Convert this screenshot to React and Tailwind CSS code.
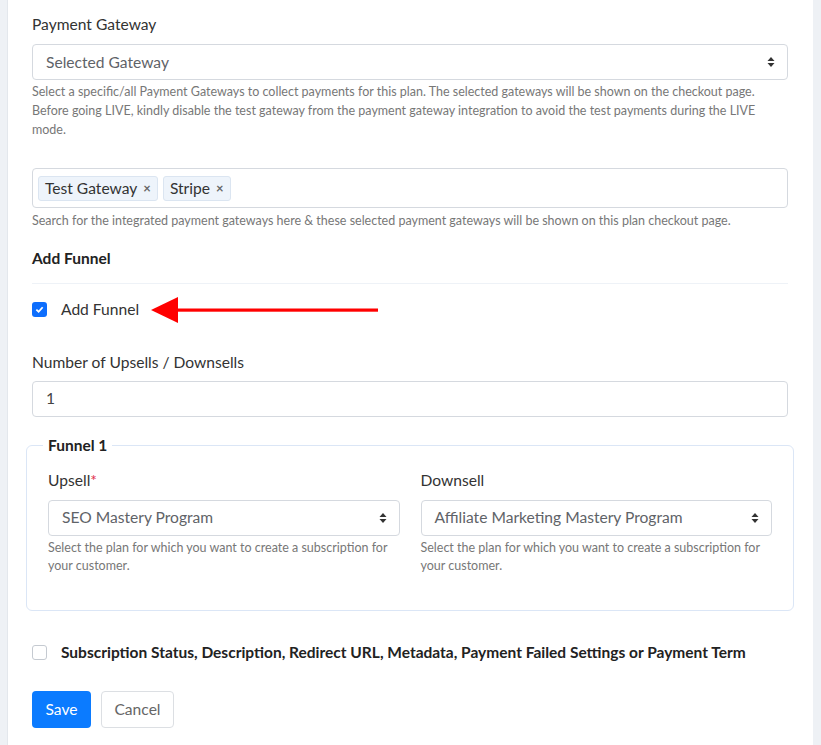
const font = { fontFamily: "Lato, 'Open Sans', sans-serif" };

function SelectBox({ value, className = "" }) {
  return (
    <div
      className={`flex h-[36px] items-center justify-between rounded-[4px] border border-[#d5d9df] bg-white pl-[13px] pr-[12px] text-[15.6px] text-[#5f6368] ${className}`}
    >
      <span>{value}</span>
      <svg width="8" height="12" viewBox="0 0 8 12" className="text-[#333]">
        <path d="M4 1 L7.5 5 H0.5 Z" fill="currentColor" />
        <path d="M4 11 L7.5 7 H0.5 Z" fill="currentColor" />
      </svg>
    </div>
  );
}

function Tag({ label }) {
  return (
    <span className="flex h-[25px] items-center gap-[6px] rounded-[3px] border border-[#dbe5f1] bg-[#eef4fb] px-[6px] text-[15.6px] text-[#333]">
      {label}
      <span className="text-[13px] font-bold text-[#666]">×</span>
    </span>
  );
}

function Help({ children, className = "" }) {
  return <p className={`text-[12.5px] text-[#777] ${className}`}>{children}</p>;
}

export default function App() {
  return (
    <div style={font} className="flex min-h-[745px] bg-[#eef1f5]">
      <div className="ml-[7px] w-[806px] border-l border-[#e3e7ec] bg-white pl-[24px] pr-[25px]">
        <div className="pt-[13px] text-[15.6px] text-[#333]">Payment Gateway</div>
        <SelectBox value="Selected Gateway" className="mt-[8px]" />
        <Help className="mt-[2px] leading-[19px]">
          Select a specific/all Payment Gateways to collect payments for this plan. The selected gateways will be shown on the checkout page.
          Before going LIVE, kindly disable the test gateway from the payment gateway integration to avoid the test payments during the LIVE
          mode.
        </Help>

        <div className="mt-[29px] flex h-[40px] items-center gap-[5px] rounded-[4px] border border-[#d5d9df] px-[5px]">
          <Tag label="Test Gateway" />
          <Tag label="Stripe" />
        </div>
        <Help className="mt-[3px] leading-[19px]">
          Search for the integrated payment gateways here &amp; these selected payment gateways will be shown on this plan checkout page.
        </Help>

        <div className="mt-[17px] text-[15.5px] font-bold text-[#222]">Add Funnel</div>
        <div className="mt-[12px] h-px bg-[#eef2f7]" />

        <div className="mt-[12px] flex items-center">
          <span className="flex h-[15px] w-[15px] items-center justify-center rounded-[3px] bg-[#0d6efd]">
            <svg width="9" height="9" viewBox="0 0 10 10">
              <path d="M1.5 5.2 L4 7.5 L8.5 2.5" stroke="white" strokeWidth="2" fill="none" />
            </svg>
          </span>
          <span className="ml-[14px] text-[15.6px] text-[#333]">Add Funnel</span>
          <svg width="228" height="28" viewBox="0 0 228 28" className="ml-[12px]">
            <path d="M0 14 L27 1 L27 27 Z" fill="#f00" />
            <rect x="25" y="12.5" width="202" height="3.2" fill="#f00" />
          </svg>
        </div>

        <div className="mt-[27px] text-[15.6px] text-[#333]">Number of Upsells / Downsells</div>
        <div className="mt-[7px] flex h-[36px] items-center rounded-[4px] border border-[#d5d9df] px-[13px] text-[15.6px] text-[#444]">
          1
        </div>

        <fieldset className="mx-[-6px] mt-[17px] rounded-[6px] border border-[#dbe6f6] px-[21px] pb-[35px] pt-[4px]">
          <legend className="-ml-[5px] px-[5px] text-[15.5px] font-bold text-[#222]">Funnel 1</legend>
          <div className="grid grid-cols-2 gap-[21px]">
            <div>
              <div className="mt-[8px] text-[15.6px] text-[#333]">
                Upsell<span className="text-[#e0314b]">*</span>
              </div>
              <SelectBox value="SEO Mastery Program" className="mt-[7px]" />
              <Help className="mt-[3px] leading-[18px]">
                Select the plan for which you want to create a subscription for your customer.
              </Help>
            </div>
            <div>
              <div className="mt-[8px] text-[15.6px] text-[#333]">Downsell</div>
              <SelectBox value="Affiliate Marketing Mastery Program" className="mt-[7px]" />
              <Help className="mt-[3px] leading-[18px]">
                Select the plan for which you want to create a subscription for your customer.
              </Help>
            </div>
          </div>
        </fieldset>

        <div className="mt-[30px] flex items-center">
          <span className="h-[15px] w-[15px] rounded-[3px] border border-[#c5cad1] bg-white" />
          <span className="ml-[14px] text-[15.5px] font-bold text-[#222]">
            Subscription Status, Description, Redirect URL, Metadata, Payment Failed Settings or Payment Term
          </span>
        </div>

        <div className="mt-[27px] flex gap-[10px] pb-[17px]">
          <button className="h-[37px] w-[59px] rounded-[4px] bg-[#0b7bff] text-[15.6px] text-white">Save</button>
          <button className="h-[37px] w-[73px] rounded-[4px] border border-[#dcdfe3] bg-white text-[15.6px] text-[#666]">
            Cancel
          </button>
        </div>
      </div>
    </div>
  );
}
